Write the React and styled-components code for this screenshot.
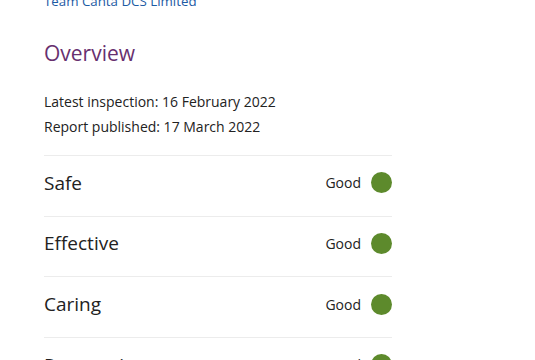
import React from "react";
import styled, { createGlobalStyle } from "styled-components";

const Global = createGlobalStyle`
  html, body { margin: 0; padding: 0; background: #fff; }
  body { font-family: "Open Sans", "Noto Sans", sans-serif; color: #222; }
`;

const Page = styled.main`
  padding: 0 143px 0 44px;
  width: 348px;
`;

const ProviderLink = styled.a`
  display: block;
  margin-top: -9px;
  font-size: 13.3px;
  line-height: 20px;
  color: #1d5ba4;
  text-decoration: none;
`;

const Heading = styled.h2`
  margin: 28px 0 0;
  font-size: 21px;
  line-height: 28px;
  font-weight: 400;
  color: #67306f;
`;

const Meta = styled.div`
  margin-top: 22px;
  font-size: 14px;
  line-height: 25px;
  color: #222;
`;

const Ratings = styled.ul`
  list-style: none;
  margin: 16px 0 0;
  padding: 0;
`;

const Row = styled.li`
  box-sizing: border-box;
  display: flex;
  align-items: center;
  justify-content: space-between;
  height: 60.67px;
  padding-bottom: 6px;
  border-top: 1px solid #ececec;
`;

const Domain = styled.span`
  font-size: 19px;
  color: #222;
`;

const Rating = styled.span`
  display: flex;
  align-items: center;
  gap: 10px;
  font-size: 14px;
  color: #222;
`;

const Dot = styled.span`
  width: 21px;
  height: 21px;
  border-radius: 50%;
  background: ${(p) => p.$color};
`;

const rows = [
  ["Safe", "Good"],
  ["Effective", "Good"],
  ["Caring", "Good"],
  ["Responsive", "Good"],
  ["Well-led", "Good"],
];

export default function App() {
  return (
    <>
      <Global />
      <Page>
        <ProviderLink href="#">Team Canta DCS Limited</ProviderLink>
        <Heading>Overview</Heading>
        <Meta>
          <div>Latest inspection: 16 February 2022</div>
          <div>Report published: 17 March 2022</div>
        </Meta>
        <Ratings>
          {rows.map(([d, r]) => (
            <Row key={d}>
              <Domain>{d}</Domain>
              <Rating>
                {r}
                <Dot $color="#5d8a2c" />
              </Rating>
            </Row>
          ))}
        </Ratings>
      </Page>
    </>
  );
}
